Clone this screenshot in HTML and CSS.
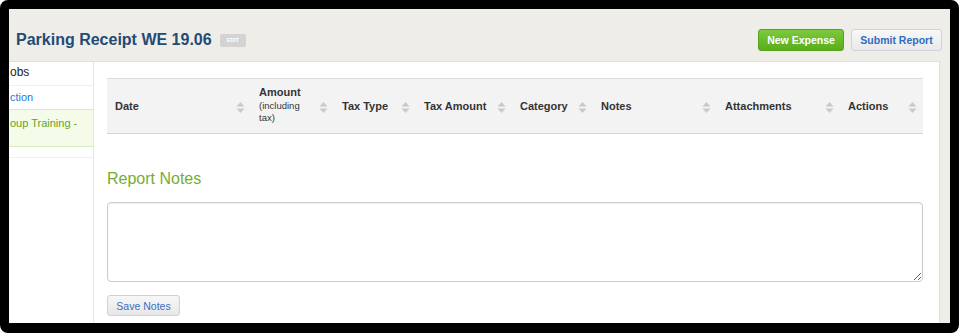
FILE: index.html
```html
<!DOCTYPE html>
<html lang="en">
<head>
<meta charset="utf-8">
<title>Parking Receipt WE 19.06</title>
<link rel="stylesheet" href="styles.css">
</head>
<body>
<div class="frame">
  <div class="screen">
    <header class="topbar">
      <div class="title-wrap">
        <h1 class="title">Parking Receipt WE 19.06</h1>
        <span class="badge">EDIT</span>
      </div>
      <div class="actions">
        <button class="btn btn-green">New Expense</button>
        <button class="btn btn-light">Submit Report</button>
      </div>
    </header>
    <div class="panel">
      <nav class="sidebar">
        <div class="side-item side-head">obs</div>
        <div class="side-item side-link">ction</div>
        <div class="side-item side-active">oup Training -</div>
        <div class="side-item side-empty"></div>
      </nav>
      <main class="content">
        <table class="grid">
          <colgroup>
            <col class="c-date"><col class="c-amount"><col class="c-taxtype"><col class="c-taxamt">
            <col class="c-cat"><col class="c-notes"><col class="c-att"><col class="c-act">
          </colgroup>
          <thead>
            <tr>
              <th><div class="th"><span class="lbl">Date</span><svg class="sort" viewBox="0 0 9 13"><polygon points="0.5,5.5 4.5,1 8.5,5.5"/><polygon points="0.5,7.5 8.5,7.5 4.5,12"/></svg></div></th>
              <th><div class="th"><span class="lbl lbl-amount">Amount<span class="sub">(including tax)</span></span><svg class="sort" viewBox="0 0 9 13"><polygon points="0.5,5.5 4.5,1 8.5,5.5"/><polygon points="0.5,7.5 8.5,7.5 4.5,12"/></svg></div></th>
              <th><div class="th"><span class="lbl">Tax Type</span><svg class="sort" viewBox="0 0 9 13"><polygon points="0.5,5.5 4.5,1 8.5,5.5"/><polygon points="0.5,7.5 8.5,7.5 4.5,12"/></svg></div></th>
              <th><div class="th"><span class="lbl">Tax Amount</span><svg class="sort" viewBox="0 0 9 13"><polygon points="0.5,5.5 4.5,1 8.5,5.5"/><polygon points="0.5,7.5 8.5,7.5 4.5,12"/></svg></div></th>
              <th><div class="th"><span class="lbl">Category</span><svg class="sort" viewBox="0 0 9 13"><polygon points="0.5,5.5 4.5,1 8.5,5.5"/><polygon points="0.5,7.5 8.5,7.5 4.5,12"/></svg></div></th>
              <th><div class="th"><span class="lbl">Notes</span><svg class="sort" viewBox="0 0 9 13"><polygon points="0.5,5.5 4.5,1 8.5,5.5"/><polygon points="0.5,7.5 8.5,7.5 4.5,12"/></svg></div></th>
              <th><div class="th"><span class="lbl">Attachments</span><svg class="sort" viewBox="0 0 9 13"><polygon points="0.5,5.5 4.5,1 8.5,5.5"/><polygon points="0.5,7.5 8.5,7.5 4.5,12"/></svg></div></th>
              <th><div class="th"><span class="lbl">Actions</span><svg class="sort" viewBox="0 0 9 13"><polygon points="0.5,5.5 4.5,1 8.5,5.5"/><polygon points="0.5,7.5 8.5,7.5 4.5,12"/></svg></div></th>
            </tr>
          </thead>
          <tbody></tbody>
        </table>
        <h2 class="notes-title">Report Notes</h2>
        <textarea class="notes"></textarea>
        <button class="btn-save">Save Notes</button>
      </main>
    </div>
  </div>
</div>
</body>
</html>
```

FILE: styles.css
```css
html, body {
  margin: 0;
  padding: 0;
  background: #ffffff;
}

body {
  font-family: "Liberation Sans", Arial, sans-serif;
  color: #333;
}

.frame {
  width: 959px;
  height: 333px;
  box-sizing: border-box;
  border-style: solid;
  border-color: #000;
  border-width: 9px 9px 10px 9px;
  border-radius: 8px;
  overflow: hidden;
}

.screen {
  height: 100%;
  display: flex;
  flex-direction: column;
  background: #efede8;
}

.topbar {
  display: flex;
  align-items: center;
  justify-content: space-between;
  padding: 20px 8px 10px 7px;
  height: 22px;
  flex: none;
}

.title-wrap {
  display: flex;
  align-items: center;
  gap: 8px;
}

.title {
  margin: 0;
  font-size: 16px;
  font-weight: bold;
  color: #1f4b75;
  line-height: 20px;
}

.badge {
  display: inline-block;
  width: 26px;
  height: 13px;
  line-height: 13px;
  text-align: center;
  background: #d3d3d3;
  color: #fff;
  font-size: 5.5px;
  font-weight: bold;
  border-radius: 2px;
  margin-top: 1px;
}

.actions {
  display: flex;
  gap: 7px;
}

.btn {
  font-family: "Liberation Sans", Arial, sans-serif;
  font-size: 10.5px;
  font-weight: bold;
  height: 22px;
  padding: 0;
  border-radius: 3px;
  cursor: pointer;
}

.btn-green {
  width: 86px;
  color: #fff;
  background: linear-gradient(#7cca3e, #5aad1c);
  border: 1px solid #56a01c;
}

.btn-light {
  width: 91px;
  color: #2f6cc0;
  background: linear-gradient(#f8f8f8, #e9e9e9);
  border: 1px solid #cfd3d8;
}

.panel {
  flex: 1;
  display: flex;
  margin-right: 10px;
  background: #fff;
  border-top: 1px solid #e2dfd8;
  border-right: 1px solid #e3e1dc;
}

.sidebar {
  width: 84px;
  flex: none;
  border-right: 1px solid #e6e6e6;
  font-size: 11px;
}

.side-item {
  padding: 0 0 0 1px;
  white-space: nowrap;
  overflow: hidden;
}

.side-head {
  height: 23px;
  line-height: 21px;
  font-size: 12px;
  color: #222;
  border-bottom: 1px solid #efefef;
}

.side-link {
  height: 23px;
  line-height: 23px;
  color: #2a78d4;
  border-bottom: 1px solid #d9ecc0;
}

.side-active {
  height: 36px;
  line-height: 26px;
  color: #66a22a;
  background: #f4fbe9;
  border-bottom: 1px solid #d9ecc0;
}

.side-empty {
  height: 10px;
  border-bottom: 1px solid #f0f0f0;
}

.content {
  flex: 1;
  padding: 16px 17px 0 13px;
}

.grid {
  width: 816px;
  table-layout: fixed;
  border-collapse: collapse;
}

.c-date { width: 144px; }
.c-amount { width: 83px; }
.c-taxtype { width: 82px; }
.c-taxamt { width: 96px; }
.c-cat { width: 81px; }
.c-notes { width: 124px; }
.c-att { width: 123px; }
.c-act { width: 83px; }

.grid th {
  background: #f3f3f3;
  border-top: 1px solid #dedede;
  border-bottom: 1px solid #d6d6d6;
  height: 54px;
  padding: 0;
  text-align: left;
  vertical-align: middle;
}

.th {
  display: flex;
  align-items: center;
  justify-content: space-between;
  padding: 0 6px 0 8px;
}

.lbl {
  font-size: 11px;
  font-weight: bold;
  color: #333;
  line-height: 13px;
}

.lbl-amount {
  display: block;
  width: 48px;
  margin-top: -2px;
}

.sub {
  display: block;
  font-size: 9.5px;
  font-weight: normal;
  line-height: 12px;
  margin-top: 1px;
}

.sort {
  width: 9px;
  height: 13px;
  flex: none;
  fill: #c9c9c9;
  margin-top: 2px;
}

.notes-title {
  margin: 35px 0 13px;
  font-size: 16px;
  font-weight: normal;
  line-height: 20px;
  color: #76ad32;
}

.notes {
  display: block;
  box-sizing: border-box;
  width: 816px;
  height: 80px;
  margin: 0;
  border: 1px solid #c9cdcf;
  border-radius: 4px;
  box-shadow: inset 0 1px 2px rgba(0, 0, 0, 0.06);
  resize: both;
}

.btn-save {
  display: block;
  margin-top: 13px;
  width: 73px;
  height: 21px;
  padding: 0;
  font-family: "Liberation Sans", Arial, sans-serif;
  font-size: 10.5px;
  color: #3a6fc4;
  background: linear-gradient(#f7f7f7, #e7e7e7);
  border: 1px solid #d0d0d0;
  border-radius: 3px;
}
```
